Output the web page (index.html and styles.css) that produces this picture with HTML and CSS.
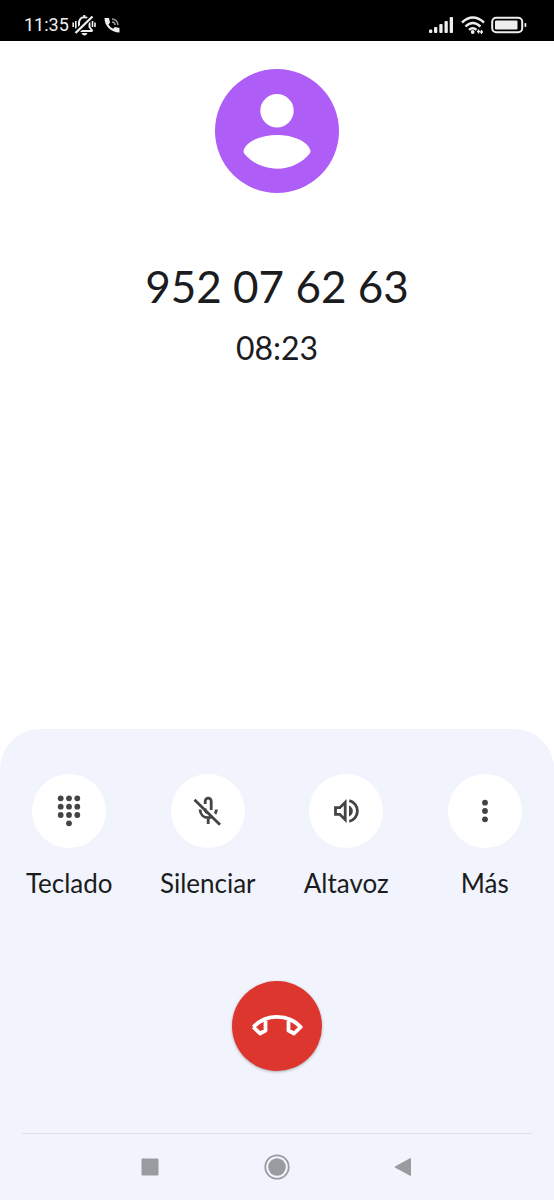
FILE: index.html
```html
<!DOCTYPE html>
<html lang="es">
<head>
<meta charset="utf-8">
<meta name="viewport" content="width=device-width, initial-scale=1">
<title>Llamada en curso</title>
<link rel="stylesheet" href="styles.css">
</head>
<body>
<div class="screen">
  <header class="status">
    <div class="status-left">
      <time class="clock">11:35</time>
      <svg class="bell" width="24" height="22" viewBox="0 0 24 22" fill="none" stroke="#eee" stroke-width="2" aria-hidden="true">
        <path d="M5 17h15.500M7 17V9.500C7 5.500 9 3.300 12.300 3.300S17.500 5.500 17.500 9.500V13L20.500 17M12.300 1v3"/>
        <path d="M9.500 19h6q-1 2.500-3 2.500t-3-2.500z" fill="#eee" stroke="none"/>
        <path d="M1.200 8.500v4.500M3.800 7v7.500M23 8.500v4.500M20.500 7v6" stroke-width="1.600"/>
        <path d="M5.500 17 18.500 4" stroke="#000" stroke-width="5"/>
        <path d="M3.500 19 20.500 2.500" stroke-width="2.400"/>
      </svg>
      <svg class="call-mark" width="16" height="16" viewBox="0 0 16 16" aria-hidden="true">
        <path d="M.5 1h4.500l1 4.500-1.500 2c1.300 2 2.300 3 4.500 4.200l2-1.700 4.500 1V15.500C7 15.500.5 9 .5 1z" fill="#eee"/>
        <path d="M8 2a6 6 0 0 1 6 6M8 5A3 3 0 0 1 11 8" fill="none" stroke="#999" stroke-width="1.600"/>
      </svg>
    </div>
    <div class="status-right">
      <svg width="26" height="18" viewBox="0 0 26 18" fill="#eee" aria-hidden="true">
        <rect x="0" y="13.500" width="3.300" height="3.500" rx="1"/><rect x="5" y="11" width="3.300" height="6" rx="1"/><rect x="10.300" y="8" width="3.300" height="9" rx="1"/><rect x="15.500" y="5" width="3.300" height="12" rx="1"/><rect x="20.700" y="1" width="3.300" height="16" rx="1"/>
      </svg>
      <svg class="wifi" width="24" height="20" viewBox="0 0 24 20" fill="none" stroke="#eee" stroke-width="2.400" aria-hidden="true">
        <path d="M1 7.500Q11.800-2.500 23 7.500M4.500 11.500q7.300-7 15 0M8 14.800q3.700-3.300 7.500 0"/>
        <circle cx="11.700" cy="17" r="1.900" fill="#eee" stroke="none"/>
        <path d="M17.500 14.500v4M20.500 15v4M16 16.500h3M19 17h3" stroke-width="1.300"/>
      </svg>
      <svg width="36" height="18" viewBox="0 0 36 18" aria-hidden="true">
        <rect x="1.200" y="1.700" width="30" height="14.600" rx="4" fill="none" stroke="#eee" stroke-width="2"/>
        <rect x="4" y="4.500" width="22.500" height="9" rx="1" fill="#eee"/>
        <rect x="33.500" y="7" width="1.800" height="4" rx=".8" fill="#eee"/>
      </svg>
    </div>
  </header>

  <main class="caller">
    <svg class="avatar" viewBox="0 0 124 124" role="img" aria-label="Contacto">
      <circle cx="62" cy="62" r="62" fill="#ae5df6"/>
      <circle cx="62" cy="41.700" r="16.700" fill="#fff"/>
      <path d="M29.200 84.500Q28.200 82.500 28.900 80.500C33 70.500 49 66 62 66S91 70.500 95.100 80.500Q95.800 82.500 94.800 84.500C88 93 76 99.700 62 99.700S36 93 29.200 84.500z" fill="#fff"/>
    </svg>
    <h1 class="number">952 07 62 63</h1>
    <time class="timer">08:23</time>
  </main>

  <section class="panel">
    <div class="actions">
      <button class="action" type="button">
        <span class="disc">
          <svg class="icon" viewBox="0 0 32 32" fill="#444" aria-hidden="true">
            <circle cx="7.700" cy="3.300" r="2.900"/><circle cx="16" cy="3.300" r="2.900"/><circle cx="24.300" cy="3.300" r="2.900"/>
            <circle cx="7.700" cy="11.700" r="2.900"/><circle cx="16" cy="11.700" r="2.900"/><circle cx="24.300" cy="11.700" r="2.900"/>
            <circle cx="7.700" cy="20" r="2.900"/><circle cx="16" cy="20" r="2.900"/><circle cx="24.300" cy="20" r="2.900"/>
            <circle cx="16" cy="28.300" r="2.900"/>
          </svg>
        </span>
        <span class="label">Teclado</span>
      </button>
      <button class="action" type="button">
        <span class="disc">
          <svg class="icon" viewBox="0 0 32 32" fill="none" stroke="#444" stroke-width="2.800" aria-hidden="true">
            <path d="M13.200 9V6.200a2.900 2.900 0 0 1 6 0V15M8 14.500c.3 5 3.700 8.200 8.200 8.200 2 0 3.200-.5 4.500-1.200M16.200 22.500V29M24.400 14.500q-.1 2.300-1.300 4.200M13.200 13.500v1.500q.3 2 2.500 2.700"/>
            <path d="M2.500 4.700 28 29.700"/>
          </svg>
        </span>
        <span class="label">Silenciar</span>
      </button>
      <button class="action" type="button">
        <span class="disc">
          <svg class="icon" viewBox="0 0 32 32" fill="none" stroke="#444" stroke-width="2.800" aria-hidden="true">
            <path d="M5.500 12.700h4.300L15.200 7.300v17.400L9.800 19.300H5.500z"/>
            <path d="M19.300 5.700a10.600 10.600 0 0 1 0 20.600"/>
            <path d="M19 10.500q3.800 2 3.800 5.500T19 21.500z" fill="#444" stroke="none"/>
          </svg>
        </span>
        <span class="label">Altavoz</span>
      </button>
      <button class="action" type="button">
        <span class="disc">
          <svg class="icon" viewBox="0 0 32 32" fill="#444" aria-hidden="true">
            <circle cx="16" cy="7.700" r="2.900"/><circle cx="16" cy="16" r="2.900"/><circle cx="16" cy="24.300" r="2.900"/>
          </svg>
        </span>
        <span class="label">Más</span>
      </button>
    </div>

    <button class="hangup" type="button" aria-label="Colgar">
      <svg width="56" height="56" viewBox="0 0 56 56" fill="none" stroke="#fff" stroke-width="3.800" stroke-linejoin="round" aria-hidden="true">
        <path d="M4.300 29C11 22 19 18.800 28 18.800s17 3.200 23.700 10.200L45 35.500l-5.500-3V20.500M4.300 29 11 35.500l5.500-3V20.500"/>
      </svg>
    </button>

    <nav class="navbar">
      <button class="nav-button" type="button" aria-label="Recientes">
        <svg width="28" height="28" viewBox="0 0 28 28" aria-hidden="true"><rect x="5.500" y="5.500" width="17" height="17" rx="1" fill="#999b9f"/></svg>
      </button>
      <button class="nav-button" type="button" aria-label="Inicio">
        <svg width="28" height="28" viewBox="0 0 28 28" aria-hidden="true"><circle cx="14" cy="14" r="11.700" fill="none" stroke="#999b9f" stroke-width="1.800"/><circle cx="14" cy="14" r="8.800" fill="#999b9f"/></svg>
      </button>
      <button class="nav-button" type="button" aria-label="Atrás">
        <svg width="28" height="28" viewBox="0 0 28 28" aria-hidden="true"><path d="M5 14 20.500 5.500v17z" fill="#999b9f" stroke="#999b9f" stroke-linejoin="round"/></svg>
      </button>
    </nav>
  </section>
</div>
</body>
</html>
```
FILE: styles.css
```css
* {
  box-sizing: border-box;
}

body {
  margin: 0;
  background: #fff;
  color: #1b1c1e;
  font-family: Lato, "Open Sans", sans-serif;
}

button {
  padding: 0;
  border: 0;
  background: none;
  color: inherit;
  font: inherit;
  cursor: pointer;
}

svg {
  display: block;
}

.screen {
  display: flex;
  flex-direction: column;
  min-height: 100vh;
}

.status {
  display: flex;
  justify-content: space-between;
  padding: 10px 27px 0 24px;
  height: 41px;
  background: #000;
  color: #eee;
}

.status-left,
.status-right {
  display: flex;
  align-items: center;
  height: 30px;
}

.status-right {
  gap: 6px;
}

.clock {
  font: 400 18px/32px Roboto, sans-serif;
}

.bell {
  margin-left: 3px;
}

.call-mark {
  margin-left: 8px;
}

.caller {
  display: flex;
  flex: 1;
  flex-direction: column;
  align-items: center;
  padding-top: 28px;
}

.avatar {
  width: 124px;
  height: 124px;
}

.number {
  margin: 63px 0 0;
  font-size: 44px;
  font-weight: 400;
  line-height: 60px;
}

.timer {
  margin-top: 12px;
  font-size: 32px;
  line-height: 40px;
}

.panel {
  display: flex;
  flex-direction: column;
  align-items: center;
  padding-top: 45px;
  border-radius: 40px 40px 0 0;
  background: #f1f4fc;
}

.actions {
  display: grid;
  grid-template-columns: repeat(4, 1fr);
  width: 100%;
}

.action {
  display: flex;
  flex-direction: column;
  align-items: center;
  gap: 19px;
}

.disc {
  display: grid;
  place-items: center;
  width: 74px;
  height: 74px;
  border-radius: 50%;
  background: #fff;
}

.icon {
  width: 32px;
  height: 32px;
}

.label {
  font-size: 26px;
  line-height: 32px;
}

.hangup {
  display: grid;
  place-items: center;
  width: 90px;
  height: 90px;
  margin: 82px 0 62px;
  border-radius: 50%;
  background: #dd362e;
  box-shadow: 0 1px 3px rgba(0, 0, 0, 0.3);
}

.navbar {
  display: grid;
  grid-template-columns: repeat(3, 1fr);
  width: 92%;
  padding: 19px 64px;
  border-top: 1px solid #dde1ea;
}

.nav-button {
  display: grid;
  place-items: center;
}
```
